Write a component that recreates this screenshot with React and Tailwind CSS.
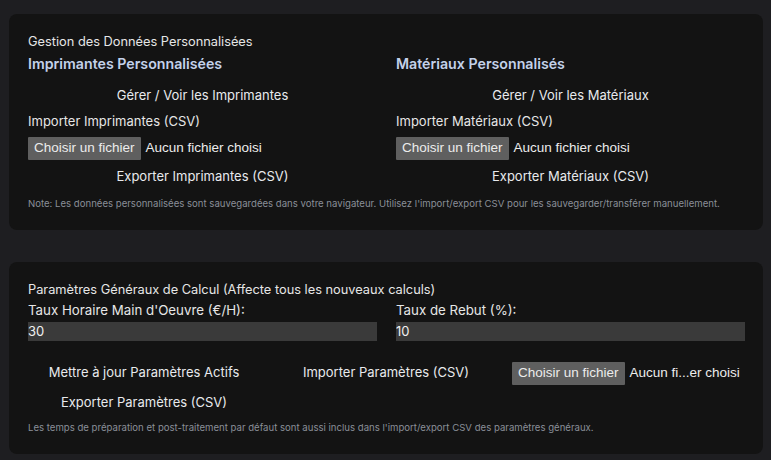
import React from "react";

const sans = { fontFamily: "Inter, 'Noto Sans', sans-serif" };

function FakeFile({ truncated }) {
  return (
    <div
      className="flex items-center h-[23px] text-[13.5px] text-[#ececec]"
      style={{ fontFamily: "'Liberation Sans', Arial, sans-serif" }}
    >
      <span className="h-full flex items-center px-[6px] bg-[#5f5f5f] rounded-[1px]">Choisir un fichier</span>
      <span className="ml-[5px] whitespace-nowrap">{truncated ? "Aucun fi...er choisi" : "Aucun fichier choisi"}</span>
    </div>
  );
}

function GhostButton({ children, className = "" }) {
  return (
    <button className={"h-[30px] text-[13px] text-[#e8eaed] bg-transparent " + className}>{children}</button>
  );
}

function Column({ title, manage, importLabel, exportLabel }) {
  return (
    <div className="flex flex-col">
      <h3 className="text-[14.2px] leading-[20px] font-semibold text-[#c3d1ea] mt-[3px]">{title}</h3>
      <GhostButton className="w-full mt-[7px]">{manage}</GhostButton>
      <div className="text-[13px] leading-[18px] text-[#e6e6e6] mt-[1px]">{importLabel}</div>
      <div className="mt-[7px]">
        <FakeFile />
      </div>
      <GhostButton className="w-full mt-[2px] h-[28px]">{exportLabel}</GhostButton>
    </div>
  );
}

export default function App() {
  return (
    <div className="min-h-[460px] bg-[#1e1e21] pl-[9px] pr-[8px] pt-[14px] pb-[7px]" style={sans}>
      <section className="bg-[#131313] rounded-[8px] pt-[19px] pb-[19px] pl-[19px] pr-[18px]">
        <h2 className="text-[12.8px] leading-[18px] text-[#e6e6e6]">Gestion des Données Personnalisées</h2>
        <div className="grid grid-cols-2 gap-x-[19px]">
          <Column
            title="Imprimantes Personnalisées"
            manage="Gérer / Voir les Imprimantes"
            importLabel="Importer Imprimantes (CSV)"
            exportLabel="Exporter Imprimantes (CSV)"
          />
          <Column
            title="Matériaux Personnalisés"
            manage="Gérer / Voir les Matériaux"
            importLabel="Importer Matériaux (CSV)"
            exportLabel="Exporter Matériaux (CSV)"
          />
        </div>
        <p className="mt-[5px] text-[9.6px] leading-[14px] text-[#8a8f98]">
          Note: Les données personnalisées sont sauvegardées dans votre navigateur. Utilisez l'import/export CSV pour les sauvegarder/transférer manuellement.
        </p>
      </section>

      <section className="mt-[32px] bg-[#131313] rounded-[8px] pt-[19px] pb-[19px] pl-[19px] pr-[18px]">
        <h2 className="text-[12.8px] leading-[18px] text-[#e6e6e6]">
          Paramètres Généraux de Calcul (Affecte tous les nouveaux calculs)
        </h2>
        <div className="grid grid-cols-2 gap-x-[19px] mt-[2px]">
          <label className="flex flex-col">
            <span className="text-[13.3px] leading-[18px] text-[#e6e6e6]">Taux Horaire Main d'Oeuvre (€/H):</span>
            <input
              readOnly
              value="30"
              className="mt-[3px] h-[19px] bg-[#3a3a3a] text-[13px] text-[#f0f0f0] outline-none"
            />
          </label>
          <label className="flex flex-col">
            <span className="text-[13.3px] leading-[18px] text-[#e6e6e6]">Taux de Rebut (%):</span>
            <input
              readOnly
              value="10"
              className="mt-[3px] h-[19px] bg-[#3a3a3a] text-[13px] text-[#f0f0f0] outline-none"
            />
          </label>
        </div>
        <div className="mt-[17px] flex flex-wrap items-center gap-x-[10px]">
          <GhostButton className="w-[232px]">Mettre à jour Paramètres Actifs</GhostButton>
          <GhostButton className="w-[232px]">Importer Paramètres (CSV)</GhostButton>
          <FakeFile truncated />
          <GhostButton className="w-[232px]">Exporter Paramètres (CSV)</GhostButton>
        </div>
        <p className="mt-[3px] text-[9.6px] leading-[14px] text-[#8a8f98]">
          Les temps de préparation et post-traitement par défaut sont aussi inclus dans l'import/export CSV des paramètres généraux.
        </p>
      </section>
    </div>
  );
}
